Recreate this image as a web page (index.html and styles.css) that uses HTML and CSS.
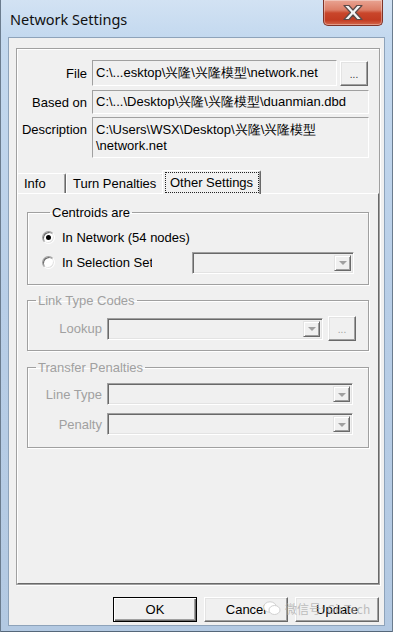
FILE: index.html
```html
<!DOCTYPE html>
<html lang="en">
<head>
    <meta charset="UTF-8">
    <meta name="viewport" content="width=device-width, initial-scale=1.0">
    <title>Network Settings</title>
    <link rel="stylesheet" href="styles.css">
</head>
<body>

    <div class="window">
        <div class="titlebar">
            <span class="title">Network Settings</span>
            <div class="close-btn">
                <svg width="22" height="17" viewBox="0 0 22 17">
                    <path d="M2 1.5 H7 L11 6 L15 1.5 H20 L13.5 8.5 L20 15.5 H15 L11 11 L7 15.5 H2 L8.5 8.5 Z" fill="#f4f4f4" stroke="#5b4a48" stroke-width="1.2" stroke-linejoin="round"/>
                </svg>
            </div>
        </div>

        <div class="client">
            <div class="frame">
                <div class="files">
                    <div class="file-row file">
                        <span class="file-label">File</span>
                        <div class="field">C:\...esktop\兴隆\兴隆模型\network.net</div>
                        <div class="btn dots">...</div>
                    </div>
                    <div class="file-row based">
                        <span class="file-label">Based on</span>
                        <div class="field">C:\...\Desktop\兴隆\兴隆模型\duanmian.dbd</div>
                    </div>
                    <div class="file-row desc">
                        <span class="file-label">Description</span>
                        <div class="field">C:\Users\WSX\Desktop\兴隆\兴隆模型<br>\network.net</div>
                    </div>
                </div>

                <div class="tabs">
                    <div class="tab tab-info">Info</div>
                    <div class="tab tab-turn">Turn Penalties</div>
                    <div class="tab tab-active"><span class="focus">Other Settings</span></div>
                </div>

                <div class="panel">
                    <fieldset class="group centroids">
                        <legend>Centroids are</legend>
                        <div class="radio-row">
                            <span class="radio checked"></span>
                            <span class="radio-text">In Network (54 nodes)</span>
                        </div>
                        <div class="radio-row">
                            <span class="radio"></span>
                            <span class="radio-text clipped">In Selection Set</span>
                            <div class="combo sel-combo"><span class="drop"></span></div>
                        </div>
                    </fieldset>

                    <fieldset class="group disabled link">
                        <legend>Link Type Codes</legend>
                        <div class="form-row">
                            <span class="row-label">Lookup</span>
                            <div class="combo lookup-combo"><span class="drop"></span></div>
                            <div class="btn dots small">...</div>
                        </div>
                    </fieldset>

                    <fieldset class="group disabled transfer">
                        <legend>Transfer Penalties</legend>
                        <div class="form-row">
                            <span class="row-label">Line Type</span>
                            <div class="combo wide-combo"><span class="drop"></span></div>
                        </div>
                        <div class="form-row">
                            <span class="row-label">Penalty</span>
                            <div class="combo wide-combo"><span class="drop"></span></div>
                        </div>
                    </fieldset>
                </div>
            </div>

            <div class="buttons">
                <div class="btn push default">OK</div>
                <div class="btn push">Cancel</div>
                <div class="btn push">Update</div>
            </div>

            <!-- watermark pasted over the screenshot -->
            <div class="watermark">
                <svg width="18" height="15" viewBox="0 0 18 15">
                    <ellipse cx="7" cy="6" rx="6.3" ry="5.2" fill="#fff" stroke="#d0d0d0"/>
                    <ellipse cx="11.5" cy="9" rx="5.5" ry="4.5" fill="#fff" stroke="#d0d0d0"/>
                </svg>
                <span>微信号: GisTech</span>
            </div>
        </div>
    </div>

</body>
</html>
```

FILE: styles.css
```css
body {
    margin: 0;
    width: 393px;
    height: 632px;
    overflow: hidden;
    font-family: "Liberation Sans", Arial, sans-serif;
    font-size: 13px;
    color: #000;
    background: #b9cfe7;
}
.window {
    position: relative;
    width: 393px;
    height: 632px;
    display: flex;
    flex-direction: column;
    background: linear-gradient(180deg, #d2e2f3 0px, #c4d9ef 36px, #b8cee7 300px, #b3c9e2 632px);
    box-shadow: inset 1px 0 0 #6b7c8e, inset -1px 0 0 #6b7c8e, inset 0 -1px 0 #55677a;
}

/* title bar */
.titlebar {
    height: 37px;
    display: flex;
    align-items: flex-start;
    flex-shrink: 0;
}
.title {
    margin: 10px 0 0 10px;
    font-family: "Noto Sans", "Open Sans", sans-serif;
    font-size: 14.5px;
    line-height: 19px;
    color: #111;
}
.close-btn {
    margin-left: auto;
    margin-right: 10px;
    width: 60px;
    height: 26px;
    box-sizing: border-box;
    border: 1px solid #7e3328;
    border-top: none;
    border-radius: 0 0 5px 5px;
    background: linear-gradient(180deg, #e9a493 0%, #dc7d66 40%, #c9462b 52%, #c23b21 80%, #d4684c 100%);
    box-shadow: inset 0 0 0 1px rgba(255, 255, 255, 0.35);
    display: flex;
    align-items: center;
    justify-content: center;
}

/* client area */
.client {
    position: relative;
    flex: 1;
    margin: 0 8px 6px;
    background: #f0f0f0;
    border: 1px solid #8ea3ba;
    display: flex;
    flex-direction: column;
    padding: 10px 4px 0 7px;
}
.frame {
    height: 537px;
    box-sizing: border-box;
    border: 1px solid #a0a0a0;
    box-shadow: inset 1px 1px 0 #fff, 1px 1px 0 #fff;
    display: flex;
    flex-direction: column;
    padding-top: 11px;
}

.file-row {
    display: flex;
    align-items: center;
}
.file-label {
    width: 70px;
    margin-right: 5px;
    text-align: right;
    white-space: nowrap;
}
.field {
    box-sizing: border-box;
    width: 277px;
    padding: 0 3px;
    border: 1px solid;
    border-color: #a0a0a0 #fff #fff #a0a0a0;
    white-space: nowrap;
    line-height: 16px;
}
.file .field {
    width: 245px;
    height: 26px;
    line-height: 24px;
}
.file .dots {
    margin-left: 3px;
}
.based {
    margin-top: 4px;
}
.based .field {
    height: 24px;
    line-height: 22px;
}
.desc {
    margin-top: 3px;
    align-items: flex-start;
}
.desc .file-label {
    margin-top: 5px;
    line-height: 16px;
}
.desc .field {
    height: 41px;
    padding-top: 4px;
}

/* buttons */
.btn {
    box-sizing: border-box;
    background: #f0f0f0;
    border: 1px solid;
    border-color: #fff #696969 #696969 #fff;
    box-shadow: inset -1px -1px 0 #a0a0a0, inset 1px 1px 0 #e3e3e3;
    display: flex;
    align-items: center;
    justify-content: center;
}
.dots {
    width: 28px;
    height: 25px;
    font-size: 10px;
    line-height: 10px;
    padding-top: 3px;
    color: #333;
}
.dots.small {
    color: #a0a0a0;
}

/* tabs */
.tabs {
    margin-top: 12px;
    height: 23px;
    display: flex;
    align-items: flex-end;
    position: relative;
    z-index: 1;
}
.tab {
    box-sizing: border-box;
    height: 20px;
    border-top: 1px solid #fff;
    border-left: 1px solid #fff;
    border-right: 1px solid #696969;
    border-radius: 2px 2px 0 0;
    box-shadow: inset -1px 0 0 #a0a0a0;
    padding: 0 6px;
    line-height: 19px;
    white-space: nowrap;
}
.tab-info {
    width: 49px;
}
.tab-turn {
    width: 98px;
}
.tab-active {
    width: 99px;
    height: 24px;
    margin-left: -2px;
    margin-bottom: -1px;
    padding: 0 1px 0 2px;
    background: #f0f0f0;
}
.focus {
    display: block;
    margin-top: 1px;
    height: 21px;
    box-sizing: border-box;
    border: 1px dotted #222;
    padding: 0 5px 0 4px;
    line-height: 19px;
}

.panel {
    flex: 1;
    border-top: 1px solid #fff;
    border-left: 1px solid #fff;
    border-right: 1px solid #696969;
    border-bottom: 1px solid #696969;
    padding: 11px 9px 0 9px;
}

/* group boxes */
.group {
    margin: 0;
    border: 1px solid #a0a0a0;
    box-shadow: inset 1px 1px 0 #fff, 1px 1px 0 #fff;
    padding: 5px 14px 9px 14px;
}
.group legend {
    margin-left: 8px;
    padding: 0 2px;
    line-height: 15px;
}
.disabled {
    color: #a0a0a0;
}
.link {
    margin-top: 8px;
    padding: 8px 0 9px 0;
}
.transfer {
    margin-top: 9px;
    padding: 8px 0 12px 0;
}

.radio-row {
    display: flex;
    align-items: center;
    height: 25px;
}
.radio {
    position: relative;
    width: 13px;
    height: 13px;
    box-sizing: border-box;
    border-radius: 50%;
    border: 1px solid;
    border-color: #a0a0a0 #fff #fff #a0a0a0;
    box-shadow: inset 1px 1px 0 #696969, inset -1px -1px 0 #e3e3e3;
    background: #fff;
}
.radio.checked::after {
    content: "";
    position: absolute;
    left: 3px;
    top: 3px;
    width: 5px;
    height: 5px;
    border-radius: 50%;
    background: #000;
}
.radio-text {
    margin-left: 7px;
    white-space: nowrap;
}
.clipped {
    width: 90px;
    overflow: hidden;
}

.form-row {
    display: flex;
    align-items: center;
    height: 25px;
}
.transfer .form-row {
    height: 22px;
}
.transfer .form-row + .form-row {
    margin-top: 8px;
}
.row-label {
    width: 74px;
    margin-right: 5px;
    text-align: right;
    white-space: nowrap;
}

/* combo boxes */
.combo {
    box-sizing: border-box;
    height: 22px;
    border: 1px solid;
    border-color: #a0a0a0 #fff #fff #a0a0a0;
    box-shadow: inset 1px 1px 0 #696969, inset -1px -1px 0 #e3e3e3;
    padding: 2px;
    display: flex;
    justify-content: flex-end;
}
.sel-combo {
    width: 162px;
    margin-left: auto;
}
.lookup-combo {
    width: 216px;
}
.lookup-combo + .btn {
    margin-left: 5px;
}
.wide-combo {
    width: 246px;
}
.drop {
    width: 17px;
    box-sizing: border-box;
    border: 1px solid;
    border-color: #e3e3e3 #696969 #696969 #e3e3e3;
    box-shadow: inset 1px 1px 0 #fff, inset -1px -1px 0 #a0a0a0;
    background: #f0f0f0;
    display: flex;
    align-items: center;
    justify-content: center;
}
.drop::after {
    content: "";
    border-left: 4px solid transparent;
    border-right: 4px solid transparent;
    border-top: 4px solid #a0a0a0;
    margin-top: 1px;
}

/* bottom buttons */
.buttons {
    display: flex;
    justify-content: flex-end;
    gap: 7px;
    margin-top: 12px;
    padding-right: 1px;
}
.push {
    width: 84px;
    height: 25px;
}
.push.default {
    border: 1px solid #000;
    box-shadow: inset 1px 1px 0 #fff, inset -1px -1px 0 #696969, inset -2px -2px 0 #a0a0a0;
}

.watermark {
    position: absolute;
    left: 254px;
    top: 562px;
    display: flex;
    align-items: center;
    gap: 4px;
    font-family: "Noto Sans CJK SC", "Liberation Sans", sans-serif;
    font-size: 12px;
    color: rgba(170, 170, 170, 0.75);
    white-space: nowrap;
    pointer-events: none;
}
```
